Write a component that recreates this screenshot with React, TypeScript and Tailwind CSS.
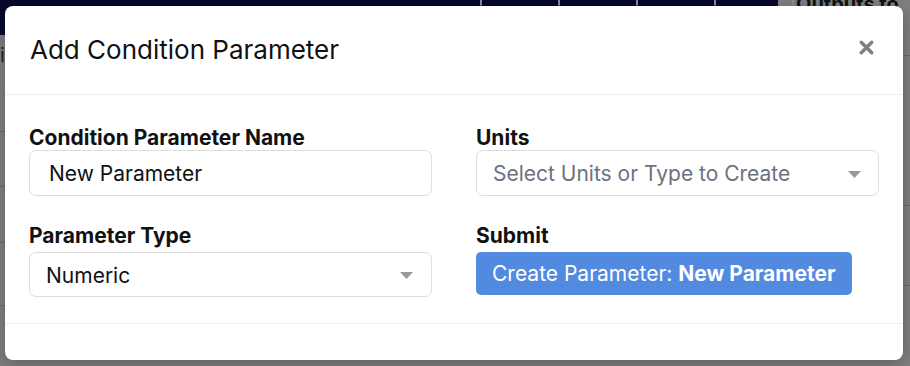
import { X } from "lucide-react";

const font = { fontFamily: "Inter, 'Noto Sans', sans-serif" };

function Caret() {
  return (
    <svg width="13" height="7" viewBox="0 0 13 7" className="shrink-0">
      <path d="M0 0 H13 L6.5 7 Z" fill="#999999" />
    </svg>
  );
}

function Backdrop() {
  return (
    <div className="absolute inset-0 bg-[#7f7f80]">
      <div className="flex h-[35px] w-[778px] items-start gap-[76px] bg-[#07072a] pl-[480px]">
        {[0, 1, 2, 3, 4, 5, 6, 7].map((i) => (
          <div key={i} className="mt-[-8px] h-[14px] w-[14px] rounded-full border border-[#8a8aa0]" />
        ))}
      </div>
      <div className="absolute right-0 top-[-6px] w-[132px] overflow-hidden whitespace-nowrap pl-[18px] text-[20px] leading-none font-bold text-[#111]">
        Outputs to
      </div>
      <div className="absolute left-0 top-[40px] text-[20px] text-[#222]">i</div>
      <div className="absolute left-0 top-[131px] h-px w-[5px] bg-[#6a6a6a]" />
      <div className="absolute left-0 top-[186px] h-px w-[5px] bg-[#6a6a6a]" />
      <div className="absolute left-0 top-[242px] h-px w-[5px] bg-[#6a6a6a]" />
      <div className="absolute left-0 top-[305px] h-px w-[5px] bg-[#6a6a6a]" />
      <div className="absolute right-0 top-[55px] h-px w-[7px] bg-[#6a6a6a]" />
      <div className="absolute right-0 top-[205px] h-px w-[7px] bg-[#6a6a6a]" />
      <div className="absolute right-0 top-[285px] h-px w-[7px] bg-[#6a6a6a]" />
    </div>
  );
}

export default function App() {
  return (
    <div className="relative h-[366px] w-[910px] overflow-hidden" style={font}>
      <Backdrop />

      <div className="absolute left-[5px] top-[6px] flex h-[354px] w-[898px] flex-col rounded-[8px] bg-white shadow-[0_4px_16px_rgba(0,0,0,0.25)]">
        <div className="flex h-[89px] items-center justify-between border-b border-[#eeeeee] pl-[25px] pr-[26px]">
          <h2 className="text-[26px] leading-none text-[#111]">Add Condition Parameter</h2>
          <X size={21} strokeWidth={4} className="mb-[5px] text-[#808080]" />
        </div>

        <div className="grid grid-cols-2 gap-x-[44px] gap-y-[28px] px-[24px] pb-[26px] pt-[31px]">
          <div className="flex flex-col">
            <label className="text-[21px] font-bold leading-[24px] text-[#111]">
              Condition Parameter Name
            </label>
            <div className="flex h-[46px] items-center rounded-[7px] border border-[#dddddd] pl-[19px] pt-[2px] text-[21px] text-[#111]">
              New Parameter
            </div>
          </div>

          <div className="flex flex-col">
            <label className="text-[21px] font-bold leading-[24px] text-[#111]">Units</label>
            <div className="flex h-[46px] items-center justify-between rounded-[7px] border border-[#dddddd] pl-[16px] pr-[17px] pt-[2px] text-[21px] text-[#6b7280]">
              <span>Select Units or Type to Create</span>
              <Caret />
            </div>
          </div>

          <div className="flex flex-col">
            <label className="mb-[4px] text-[21px] font-bold leading-[24px] text-[#111]">
              Parameter Type
            </label>
            <div className="flex h-[45px] items-center justify-between rounded-[7px] border border-[#dddddd] pl-[16px] pr-[18px] pt-[2px] text-[21px] text-[#111]">
              <span>Numeric</span>
              <Caret />
            </div>
          </div>

          <div className="flex flex-col items-start">
            <label className="mb-[4px] text-[21px] font-bold leading-[24px] text-[#111]">Submit</label>
            <button className="flex h-[43px] items-center rounded-[5px] bg-[#528ae0] px-[16px] text-[21px] text-white">
              Create Parameter:&nbsp;<span className="font-bold">New Parameter</span>
            </button>
          </div>
        </div>

        <div className="flex-1 border-t border-[#eeeeee]" />
      </div>
    </div>
  );
}
